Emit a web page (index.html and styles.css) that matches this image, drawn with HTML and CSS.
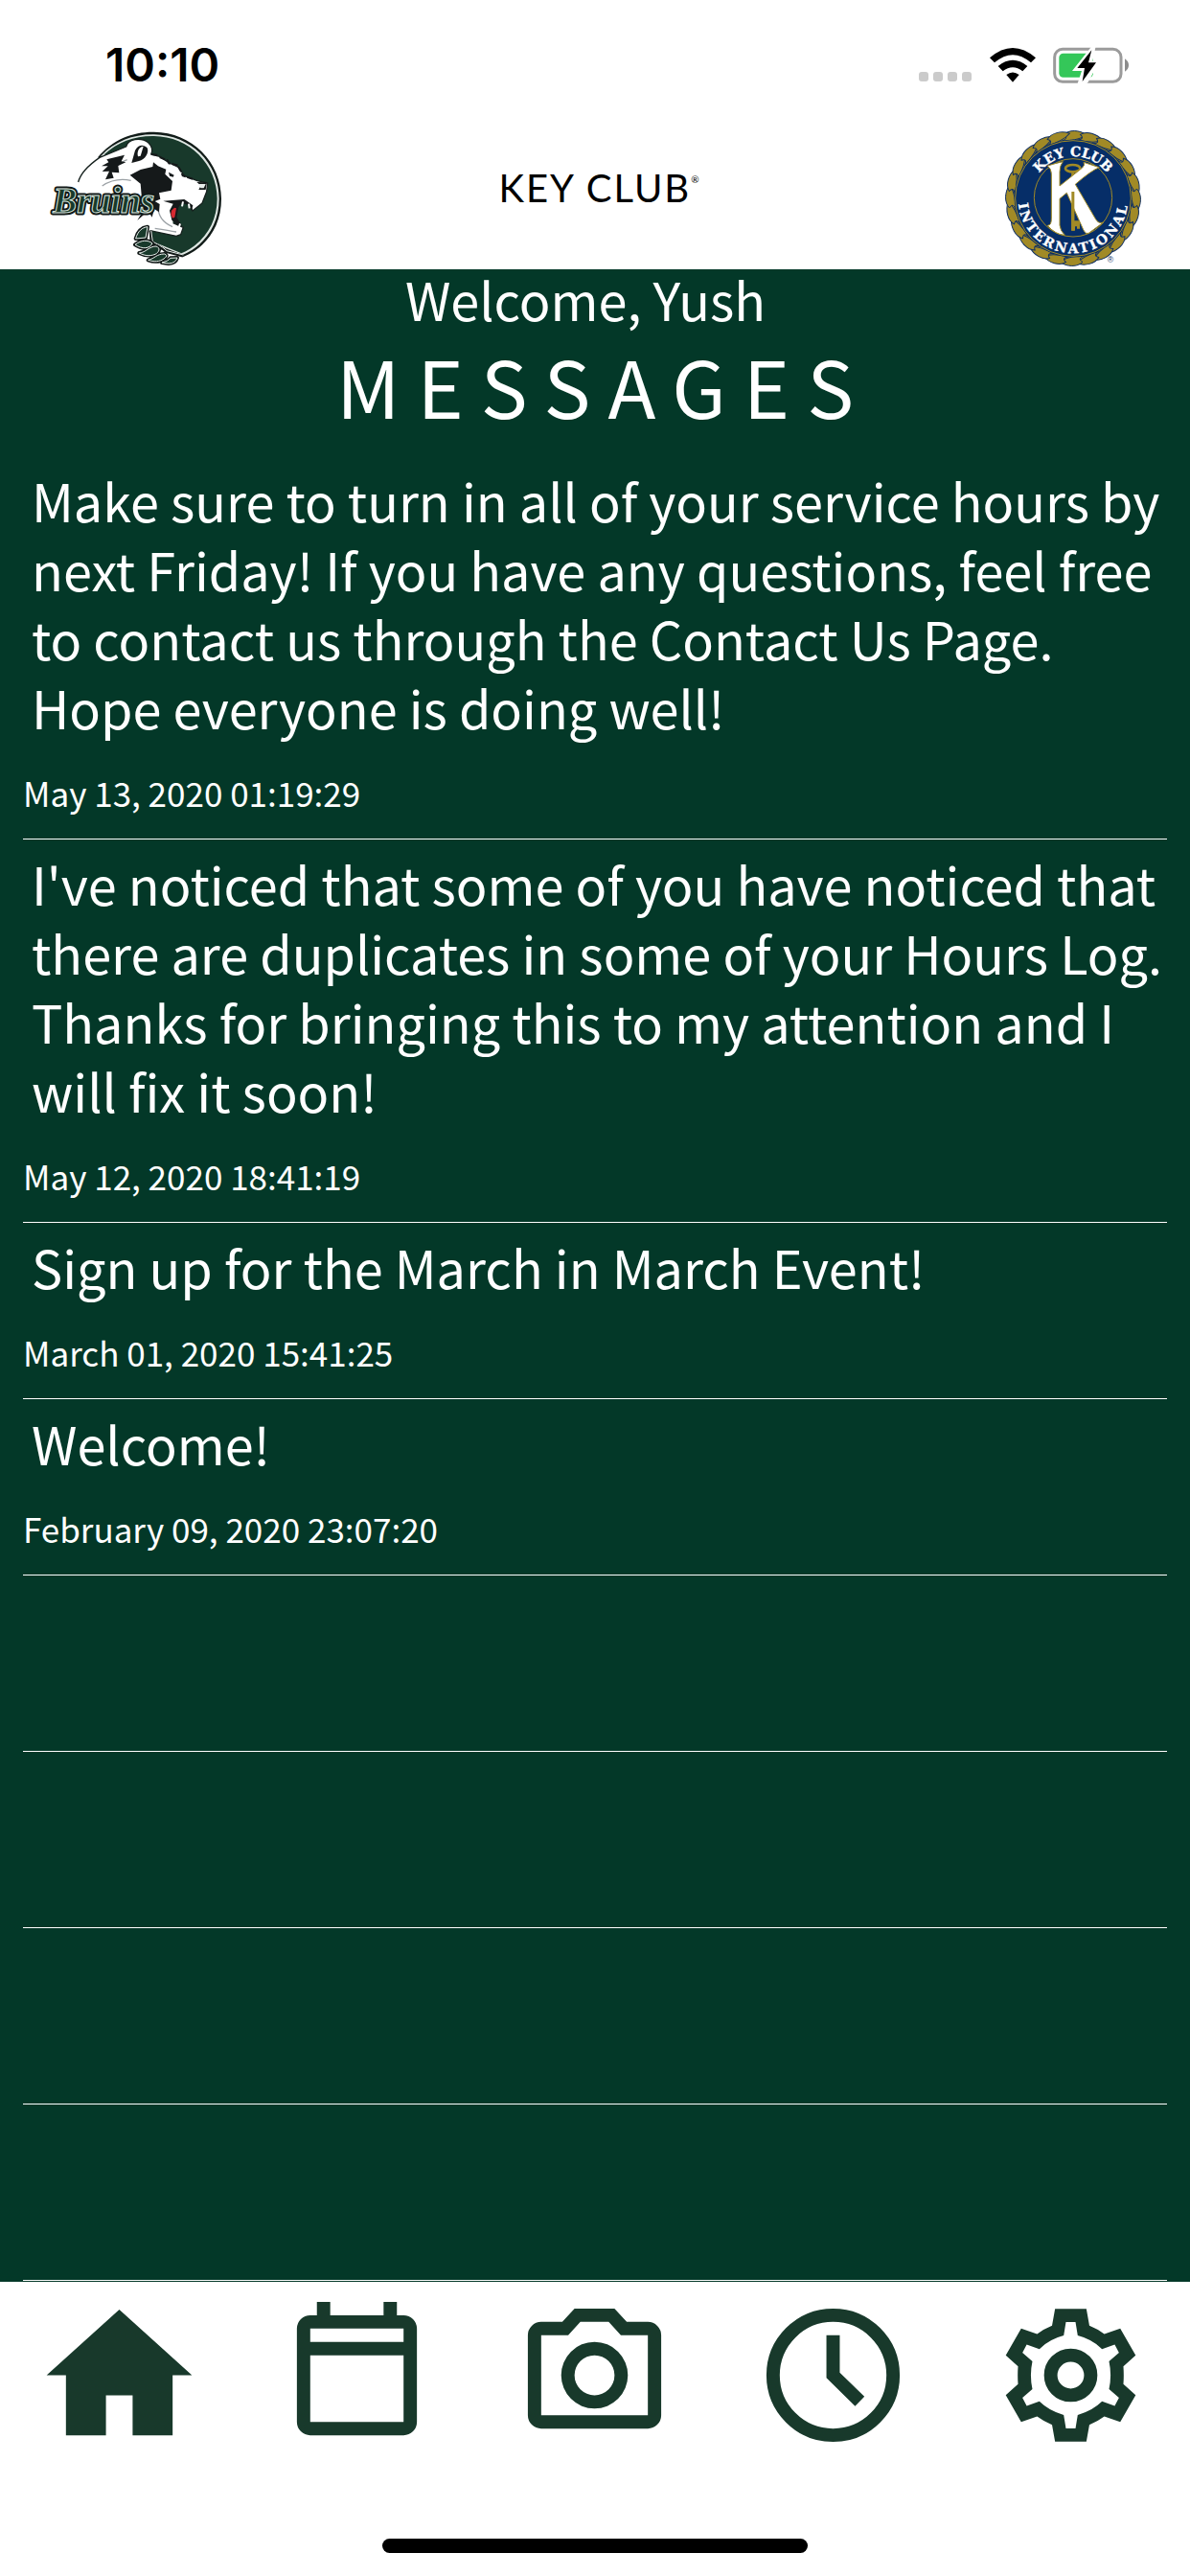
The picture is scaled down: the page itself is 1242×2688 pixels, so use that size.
FILE: index.html
```html
<!DOCTYPE html>
<html lang="en">
<head>
<meta charset="utf-8">
<meta name="viewport" content="width=device-width, initial-scale=1">
<title>Key Club Messages</title>
<link rel="stylesheet" href="styles.css">
</head>
<body>
<div class="app">
  <div class="status">
    <time class="clock">10:10</time>
    <div class="indicators">
      <svg class="signal" viewBox="0 0 55 10" role="img" aria-label="No signal">
        <rect width="10" height="10" rx="3"/><rect x="15" width="10" height="10" rx="3"/><rect x="30" width="10" height="10" rx="3"/><rect x="45" width="10" height="10" rx="3"/>
      </svg>
      <svg class="wifi" viewBox="0 0 144 108" role="img" aria-label="Wi-Fi">
        <path d="M0 31Q72-31 144 31L129 46Q72-3 15 46Z"/>
        <path d="M26 57Q72 19 118 57L103 73Q72 48 41 73Z"/>
        <path d="M52 84Q72 69 92 84L72 107Z"/>
      </svg>
      <svg class="battery" viewBox="0 0 240 120" role="img" aria-label="Battery charging">
        <rect x="5" y="10" width="208" height="102" rx="25" fill="#fff" stroke="#9b9b9b" stroke-width="9"/>
        <path d="M225 40Q237 48 237 60T225 80Z" fill="#8c8c8c"/>
        <rect x="19" y="23" width="107" height="75" rx="13" fill="#34c759"/>
        <path d="M122 0L60 78H90L76 120L108 116L146 47H124L134 0Z" fill="#fff"/>
        <path d="M121 13L76 69H99L92 111L135 52H111Z" fill="#000"/>
      </svg>
    </div>
  </div>

  <header class="brand">
    <svg class="bruins" viewBox="0 0 660 483" role="img" aria-label="Bruins">
      <path d="M216 133C262 76 328 52 392 53C512 54 603 148 603 262C603 350 556 414 484 444L380 410L375 200Z" fill="#111b18"/>
      <path d="M226 128C270 82 328 60 392 61C506 62 596 150 596 262C596 344 552 408 482 438L384 400L375 200Z" fill="#dfe7e3"/>
      <path d="M236 124C280 84 330 65 392 66C502 67 590 154 590 262C590 340 548 402 478 433L388 396L375 200Z" fill="#18392b"/>
      <path d="M155 210C163 178 190 155 222 133L305 99C310 75 350 68 374 86C387 98 388 112 383 123L410 130L440 150L470 164L487 190L528 206L560 213L557 240L543 276L513 300L506 285L488 268L459 270L448 305L452 338L484 352L476 374L462 379L380 362L350 350L340 300L220 260L160 235Z" fill="#fff"/>
      <path d="M155 210C163 178 190 155 222 133L305 99C310 75 350 68 374 86C387 98 388 112 383 123L410 130L440 150L470 164L487 190L528 206L560 213L557 240L543 276L513 300L506 285L488 268M452 338L484 352L476 374L462 379L380 362" fill="none" stroke="#16211e" stroke-width="4" stroke-linejoin="round"/>
      <path d="M270 165Q292 146 308 140M230 222Q270 195 320 205M395 355Q440 362 462 366M405 285Q404 330 450 350" fill="none" stroke="#9ba1a5" stroke-width="4"/>
      <path d="M244 139L300 125L290 145L304 148L280 159L283 181L260 179L266 197L240 202L252 176L230 177L248 160L228 160L250 148Z" fill="#15191a"/>
      <path d="M322 150L333 111C342 92 360 91 371 103C378 118 364 141 345 144Z" fill="#15191a"/>
      <path d="M342 130C337 113 347 99 359 98L350 128Z" fill="#fff"/>
      <path d="M317 188L350 171L388 162L390 148L405 160L430 170L427 185L450 207L446 236L408 244L412 263L395 270L410 279L408 304L393 294L386 320L374 300L340 330L354 306L338 311L356 286L350 215Z" fill="#15191a"/>
      <path d="M438 179L455 188L452 194L441 191Z" fill="#15191a"/>
      <path d="M385 123L408 126M410 132L434 142L439 151L465 157L479 180L482 190L516 201" fill="none" stroke="#15191a" stroke-width="6" stroke-dasharray="18 5"/>
      <path d="M526 210L558 211L554 234L532 234L539 221Z" fill="#15191a"/>
      <path d="M533 216L554 216L548 229H538Z" fill="#e8eceb"/>
      <path d="M421 269L487 264L514 283L510 300L502 282L478 276L469 289L463 320L480 347L468 346L448 329L441 299L452 278Z" fill="#15191a"/>
      <path d="M447 299L456 290L462 292L457 320L450 323L445 311Z" fill="#d72931"/>
      <path d="M483 271L480 286M501 278L503 292M474 340L469 356" stroke="#fff" stroke-width="6"/>
      <path d="M381 362L386 398L417 416L430 427L483 441" fill="none" stroke="#111817" stroke-width="9"/>
      <path d="M383 362L388 396L419 414L432 425L484 438" fill="none" stroke="#e6eeea" stroke-width="3"/>
      <g fill="#18392b" stroke="#111817" stroke-width="12" stroke-linejoin="round">
        <path id="claws" d="M335 387C341 364 355 352 372 350L366 384ZM333 406C352 391 374 390 387 402C378 419 356 421 333 406ZM346 432C368 430 376 411 399 411C414 416 408 430 396 436C376 444 360 439 346 432ZM374 454C396 449 399 435 425 435Q437 439 426 448C410 461 390 460 374 454ZM417 462Q438 457 444 448L465 447Q460 464 438 465Z"/>
      </g>
      <use href="#claws" fill="#18392b" stroke="#e6eeea" stroke-width="3"/>
      <g class="bruins-edge"><text id="bruins-name" class="bruins-text" x="76" y="306">Bruins</text></g>
      <use class="bruins-fill" href="#bruins-name"/>
    </svg>

    <h1 class="wordmark">KEY CLUB<sup>®</sup></h1>

    <svg class="seal" viewBox="0 0 540 483" role="img" aria-label="Key Club International">
      <defs>
        <path id="seal-top" d="M138 261A132 132 0 0 1 402 261"/>
        <path id="seal-bottom" d="M109 200A172 172 0 1 0 431 200"/>
        <path id="strand" d="M240 62C256 45 290 46 312 62C290 78 261 80 235 81C251 76 252 68 240 62Z" fill="#a18a26" stroke="#103064" stroke-width="3"/>
      </defs>
      <circle cx="270" cy="261" r="197" fill="#a18a26" stroke="#103064" stroke-width="4"/>
      <g>
        <g id="rope-part"><use href="#strand"/><use href="#strand" transform="rotate(15 270 261)"/><use href="#strand" transform="rotate(30 270 261)"/><use href="#strand" transform="rotate(45 270 261)"/><use href="#strand" transform="rotate(60 270 261)"/><use href="#strand" transform="rotate(75 270 261)"/></g>
        <use href="#rope-part" transform="rotate(90 270 261)"/><use href="#rope-part" transform="rotate(180 270 261)"/><use href="#rope-part" transform="rotate(270 270 261)"/>
      </g>
      <circle cx="270" cy="261" r="184" fill="#062e68"/>
      <circle cx="270" cy="261" r="181" fill="none" stroke="#a18a26" stroke-width="3"/>
      <circle cx="270" cy="259" r="122" fill="#062e68" stroke="#a18a26" stroke-width="3"/>
      <g fill="none" stroke="#a18a26"><ellipse cx="269" cy="167" rx="23" ry="11" stroke-width="8"/><path d="M269 178V362" stroke-width="9"/></g>
      <path d="M190 159Q215 151 238 146Q228 158 228 178V222L298 166Q309 156 303 148L352 164Q326 174 277 217L340 325Q349 342 365 336L320 369Q310 375 302 359L250 244L228 262V345Q230 363 244 376Q215 375 190 346Q202 346 202 325V184Q202 169 190 159Z" fill="#fff" stroke="#a18a26" stroke-width="3"/>
      <path d="M265 240H274V331H291V356H282V349H276V362H265Z" fill="#a18a26"/>
      <text class="seal-text"><textPath href="#seal-top" startOffset="50%" text-anchor="middle">KEY CLUB</textPath></text>
      <text class="seal-text seal-low"><textPath href="#seal-bottom" startOffset="50%" text-anchor="middle">INTERNATIONAL</textPath></text>
      <text class="seal-mark" x="377" y="462">®</text>
    </svg>
  </header>

  <main class="board">
    <p class="welcome">Welcome, Yush</p>
    <h2 class="title">MESSAGES</h2>
    <ul class="messages">
      <li class="message"><p class="body">Make sure to turn in all of your service hours by next Friday! If you have any questions, feel free to contact us through the Contact Us Page. Hope everyone is doing well!</p><time class="date">May 13, 2020 01:19:29</time></li>
      <li class="message"><p class="body">I've noticed that some of you have noticed that there are duplicates in some of your Hours Log. Thanks for bringing this to my attention and I will fix it soon!</p><time class="date">May 12, 2020 18:41:19</time></li>
      <li class="message"><p class="body">Sign up for the March in March Event!</p><time class="date">March 01, 2020 15:41:25</time></li>
      <li class="message"><p class="body">Welcome!</p><time class="date">February 09, 2020 23:07:20</time></li>
      <li class="message"></li>
      <li class="message"></li>
      <li class="message"></li>
      <li class="message"></li>
    </ul>
  </main>

  <nav class="tabs">
    <a class="tab" href="#home" aria-label="Home"><svg viewBox="0 0 24 24"><path d="M12 2.15L22.9 12H20V21H14V15H10V21H4V12H1.1Z"/></svg></a>
    <a class="tab" href="#calendar" aria-label="Calendar"><svg viewBox="0 0 24 24"><path fill-rule="evenodd" d="M6 1H8V3H16V1H18V3H19A2 2 0 0 1 21 5V19A2 2 0 0 1 19 21H5A2 2 0 0 1 3 19V5A2 2 0 0 1 5 3H6ZM5 5V7H19V5ZM5 9V19H19V9Z"/></svg></a>
    <a class="tab" href="#camera" aria-label="Camera"><svg viewBox="0 0 24 24"><path fill-rule="evenodd" d="M20 4H16.83L15 2H9L7.17 4H4A2 2 0 0 0 2 6V18A2 2 0 0 0 4 20H20A2 2 0 0 0 22 18V6A2 2 0 0 0 20 4ZM20 18H4V6H8.05L9.88 4H14.12L15.95 6H20ZM12 7A5 5 0 1 0 12 17A5 5 0 1 0 12 7ZM12 15A3 3 0 1 1 12 9A3 3 0 1 1 12 15Z"/></svg></a>
    <a class="tab" href="#hours" aria-label="Hours log"><svg viewBox="0 0 24 24"><circle cx="12" cy="12" r="9" fill="none" stroke="currentColor" stroke-width="2"/><path d="M11 6H13V11.6L16.7 15.2L15.3 16.65L11 12.4Z"/></svg></a>
    <a class="tab" href="#settings" aria-label="Settings"><svg viewBox="0 0 24 24"><path fill-rule="evenodd" d="M9.65 2.05H14.35L14.8 4.57Q16 5.05 17.04 5.82L19.43 5L21.74 9.03L19.9 10.66Q20 12 19.9 13.34L21.74 14.97L19.43 19L17.04 18.18Q16 18.95 14.8 19.43L14.35 21.95H9.65L9.2 19.43Q8 18.95 6.96 18.18L4.57 19L2.26 14.97L4.1 13.34Q4 12 4.1 10.66L2.26 9.03L4.57 5L6.96 5.82Q8 5.05 9.2 4.57ZM11.28 4.04L10.95 6.05Q8.8 6.6 7.3 8.07L5.4 7.4L4.76 8.64L6.25 9.9Q5.8 12 6.25 14.1L4.76 15.36L5.4 16.6L7.3 15.93Q8.8 17.4 10.95 17.95L11.28 19.96H12.72L13.05 17.95Q15.2 17.4 16.7 15.93L18.6 16.6L19.24 15.36L17.75 14.1Q18.2 12 17.75 9.9L19.24 8.64L18.6 7.4L16.7 8.07Q15.2 6.6 13.05 6.05L12.72 4.04Z"/><circle cx="12" cy="12" r="3" fill="none" stroke="currentColor" stroke-width="2"/></svg></a>
  </nav>
  <div class="home-area"><div class="home-bar"></div></div>
</div>
</body>
</html>
```

FILE: styles.css
```css
* {
  box-sizing: border-box;
}

body {
  margin: 0;
  background: #fff;
  color: #000;
  font-family: "Noto Sans CJK SC", "Noto Sans", sans-serif;
}

h1, h2, p, ul {
  margin: 0;
  padding: 0;
  font-weight: 400;
}

.app {
  min-height: 100vh;
  display: flex;
  flex-direction: column;
}

/* Status bar */
.status {
  height: 120px;
  padding: 16px 63px 0 110px;
  display: flex;
  align-items: flex-start;
  justify-content: space-between;
}

.clock {
  font: 600 48px/104px Inter, sans-serif;
}

.indicators {
  height: 104px;
  display: flex;
  align-items: center;
}

.signal {
  width: 55px;
  height: 10px;
  margin: 24px 19px 0 0;
  fill: #cbcbcb;
}

.wifi {
  width: 48px;
  height: 36px;
  margin-right: 18px;
}

.battery {
  width: 80px;
  height: 40px;
}

/* Brand header */
.brand {
  padding: 0 32px 0 30px;
  display: grid;
  grid-template-columns: 1fr auto 1fr;
  align-items: start;
}

.bruins {
  width: 220px;
  height: 161px;
}

.bruins-text {
  font: italic 700 112px "Liberation Serif", serif;
}

.bruins-edge {
  fill: #111817;
  stroke: #111817;
  stroke-width: 15px;
  stroke-linejoin: round;
}

.bruins-fill {
  fill: #18392b;
  stroke: #d8e5df;
  stroke-width: 3px;
}

.wordmark {
  padding: 52px 0 0 10px;
  font: 400 40px/48px Lato, sans-serif;
  letter-spacing: 2px;
}

.wordmark sup {
  font-size: 10px;
  line-height: 10px;
  vertical-align: 20px;
  letter-spacing: 0;
}

.seal {
  width: 180px;
  height: 161px;
  justify-self: end;
}

.seal-text {
  font: 700 42px "DejaVu Serif", serif;
  fill: #fff;
  stroke: #fff;
  stroke-width: 1px;
}

.seal-low {
  letter-spacing: 7px;
}

.seal-mark {
  font: 26px "Liberation Sans", sans-serif;
  fill: #103064;
}

/* Message board */
.board {
  flex: 1;
  padding-bottom: 1px;
  background: #033828;
  color: #fff;
}

.welcome {
  padding-right: 20px;
  font-size: 54px;
  line-height: 62px;
  text-align: center;
}

.title {
  padding: 0 0 15px 18px;
  font-size: 82px;
  line-height: 118px;
  letter-spacing: 18px;
  text-align: center;
}

.messages {
  padding: 0 24px;
  list-style: none;
}

.message {
  min-height: 184px;
  padding: 10px 0;
  border-bottom: 1px solid #fff;
}

.body {
  padding-left: 9px;
  font-size: 54px;
  line-height: 72px;
}

.date {
  display: block;
  margin-top: 21px;
  padding-bottom: 6px;
  font-size: 35px;
  line-height: 64px;
}

/* Tab bar */
.tabs {
  padding-top: 14px;
  display: grid;
  grid-template-columns: repeat(5, 1fr);
}

.tab {
  display: flex;
  justify-content: center;
  color: #18392b;
}

.tab svg {
  width: 167px;
  height: 167px;
  fill: currentColor;
}

.home-area {
  padding: 87px 0 24px;
  display: flex;
  justify-content: center;
}

.home-bar {
  width: 444px;
  height: 15px;
  border-radius: 8px;
  background: #000;
}
```
